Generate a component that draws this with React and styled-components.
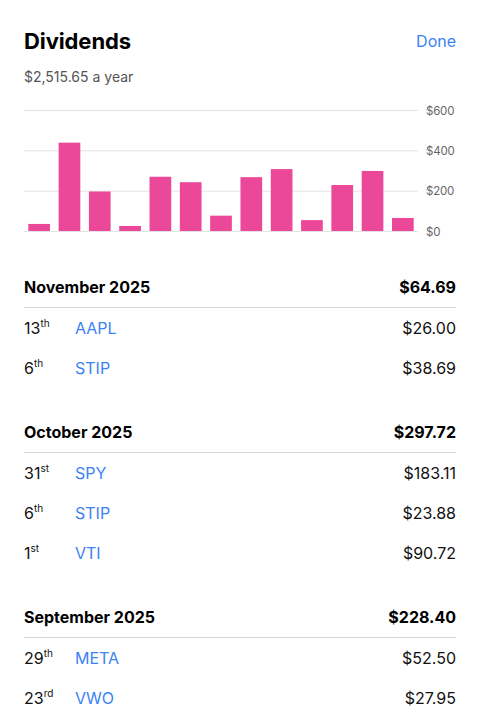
import React from 'react';
import styled, { createGlobalStyle } from 'styled-components';

const GlobalStyle = createGlobalStyle`
  html, body {
    margin: 0;
    padding: 0;
    background: #fff;
    font-family: Inter, "Helvetica Neue", "Liberation Sans", Arial, sans-serif;
    color: #000;
  }
`;

const Page = styled.div`
  padding: 24px 44px 0 24px;
  width: 500px;
  box-sizing: border-box;
  height: 713px;
  overflow: hidden;
`;

const Header = styled.div`
  display: flex;
  justify-content: space-between;
  align-items: center;
  height: 34px;
`;

const Title = styled.h1`
  margin: 0;
  font-size: 22px;
  font-weight: 700;
  letter-spacing: -0.1px;
`;

const DoneButton = styled.button`
  border: none;
  background: none;
  padding: 0;
  font: inherit;
  font-size: 16px;
  color: #3b82f6;
  cursor: pointer;
`;

const Subtitle = styled.div`
  margin-top: 10px;
  font-size: 14px;
  line-height: 17px;
  color: #555;
`;

const ChartWrap = styled.div`
  margin-top: 10px;
  margin-bottom: 27px;
  height: 145px;

  svg {
    display: block;
    overflow: visible;
  }
`;

const Section = styled.section`
  margin-bottom: 24px;
`;

const MonthRow = styled.div`
  display: flex;
  justify-content: space-between;
  align-items: center;
  height: 40px;
  font-size: 16px;
  font-weight: 700;
  border-bottom: 1px solid #d6d6d6;
`;

const Row = styled.div`
  display: flex;
  align-items: center;
  height: 40px;
  font-size: 16px;
`;

const Day = styled.span`
  width: 51px;
  color: #111;
  sup {
    font-size: 10px;
    position: relative;
    top: -1px;
  }
`;

const Ticker = styled.span`
  flex: 1;
  color: #3b82f6;
`;

const Amount = styled.span`
  color: #111;
`;

const values = [35, 438, 196, 25, 269, 242, 76, 267, 307, 54, 228, 297.72, 64.69];

function Chart() {
  const top = 15;
  const bottom = 136;
  const plotRight = 394;
  const max = 600;
  const scale = (v) => bottom - (v / max) * (bottom - top);
  const band = plotRight / values.length;
  const barW = 21.7;
  const ticks = [0, 200, 400, 600];
  return (
    <svg width="432" height="145">
      {ticks.map((t) => (
        <g key={t}>
          <line x1="0" x2={plotRight} y1={scale(t) + 0.5} y2={scale(t) + 0.5} stroke="#e3e3e3" strokeWidth="1" />
          <text x="402" y={scale(t) + 4.5} fontSize="11.5" letterSpacing="-0.2" fill="#666">${t}</text>
        </g>
      ))}
      {values.map((v, i) => (
        <rect
          key={i}
          x={i * band + (band - barW) / 2}
          y={scale(v)}
          width={barW}
          height={bottom - scale(v)}
          fill="#ec4899"
        />
      ))}
    </svg>
  );
}

const months = [
  {
    name: 'November 2025',
    total: '$64.69',
    items: [
      ['13', 'th', 'AAPL', '$26.00'],
      ['6', 'th', 'STIP', '$38.69'],
    ],
  },
  {
    name: 'October 2025',
    total: '$297.72',
    items: [
      ['31', 'st', 'SPY', '$183.11'],
      ['6', 'th', 'STIP', '$23.88'],
      ['1', 'st', 'VTI', '$90.72'],
    ],
  },
  {
    name: 'September 2025',
    total: '$228.40',
    items: [
      ['29', 'th', 'META', '$52.50'],
      ['23', 'rd', 'VWO', '$27.95'],
    ],
  },
];

export default function App() {
  return (
    <>
      <GlobalStyle />
      <Page>
        <Header>
          <Title>Dividends</Title>
          <DoneButton>Done</DoneButton>
        </Header>
        <Subtitle>$2,515.65 a year</Subtitle>
        <ChartWrap>
          <Chart />
        </ChartWrap>
        {months.map((m) => (
          <Section key={m.name}>
            <MonthRow>
              <span>{m.name}</span>
              <span>{m.total}</span>
            </MonthRow>
            {m.items.map(([d, suf, t, a]) => (
              <Row key={t + d}>
                <Day>{d}<sup>{suf}</sup></Day>
                <Ticker>{t}</Ticker>
                <Amount>{a}</Amount>
              </Row>
            ))}
          </Section>
        ))}
      </Page>
    </>
  );
}
